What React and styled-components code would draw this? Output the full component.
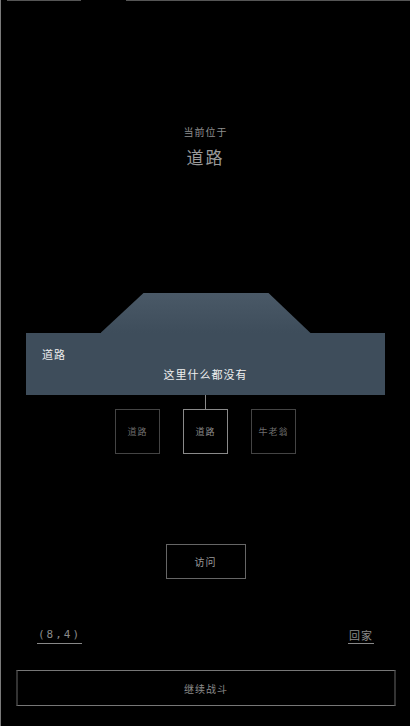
import React from "react";
import styled, { createGlobalStyle } from "styled-components";

const Global = createGlobalStyle`
  html, body { margin: 0; padding: 0; background: #000; }
  body { font-family: "Noto Sans CJK SC", "Noto Sans", sans-serif; }
  #root { width: 410px; height: 726px; }
`;

const Frame = styled.div`
  position: relative;
  width: 410px;
  height: 726px;
  box-sizing: border-box;
  border-left: 1px solid #7a7a7a;
  background: #000;
  display: flex;
  flex-direction: column;
  overflow: hidden;
`;

const TopEdge = styled.div`
  display: flex;
  height: 1px;
  gap: 45px;
  padding-left: 6px;
`;

const EdgeSeg = styled.div`
  height: 1px;
  background: #555;
  width: ${(p) => (p.$w ? `${p.$w}px` : "auto")};
  flex: ${(p) => (p.$w ? "none" : "1")};
`;

const Header = styled.div`
  margin-top: 122px;
  display: flex;
  flex-direction: column;
  align-items: center;
  color: #8e8e8e;
`;

const SubTitle = styled.div`
  font-size: 10px;
  line-height: 18px;
  letter-spacing: 1px;
`;

const Title = styled.div`
  margin-top: 4px;
  font-size: 17px;
  line-height: 24px;
  letter-spacing: 2px;
  color: #9a9a9a;
`;

const MapArea = styled.div`
  margin-top: 124px;
  display: flex;
  flex-direction: column;
  align-items: center;
`;

const Roof = styled.div`
  width: 210px;
  height: 40px;
  background: linear-gradient(#4a5967, #3e4d5b);
  clip-path: polygon(43px 0, 168px 0, 210px 40px, 0 40px);
`;

const Tile = styled.div`
  align-self: stretch;
  margin: 0 25px;
  height: 62px;
  background: #3e4d5b;
  box-sizing: border-box;
  padding: 12px 16px 0;
  color: #f0f0f0;
  font-size: 11px;
  display: flex;
  flex-direction: column;
`;

const TileName = styled.div`
  line-height: 18px;
  letter-spacing: 1px;
`;

const TileDesc = styled.div`
  text-align: center;
  line-height: 18px;
  margin-top: 2px;
  letter-spacing: 1px;
`;

const Connector = styled.div`
  width: 1px;
  height: 14px;
  background: #8a8a8a;
`;

const Choices = styled.div`
  display: flex;
  gap: 23px;
`;

const Choice = styled.div`
  width: 45px;
  height: 45px;
  box-sizing: border-box;
  border: 1px solid ${(p) => (p.$active ? "#8a8a8a" : "#444")};
  display: flex;
  align-items: center;
  justify-content: center;
  color: ${(p) => (p.$active ? "#8a8a8a" : "#6e6e6e")};
  font-size: 9px;
  letter-spacing: 1px;
`;

const VisitButton = styled.div`
  margin: 90px auto 0;
  width: 80px;
  height: 35px;
  box-sizing: border-box;
  border: 1px solid #666;
  display: flex;
  align-items: center;
  justify-content: center;
  color: #9a9a9a;
  font-size: 10px;
  letter-spacing: 1px;
`;

const InfoRow = styled.div`
  margin-top: 48px;
  display: flex;
  justify-content: space-between;
  padding: 0 36px 0 36px;
`;

const LinkText = styled.span`
  color: #8a8a8a;
  font-size: ${(p) => p.$size || 11}px;
  font-family: ${(p) => (p.$mono ? '"DejaVu Sans Mono", monospace' : '"Noto Sans CJK SC", sans-serif')};
  letter-spacing: ${(p) => p.$ls || 1}px;
  line-height: 16px;
  border-bottom: 1px solid #888;
  padding: 0 1px;
`;

const BattleButton = styled.div`
  margin: 26px 14px 0 15px;
  height: 36px;
  box-sizing: border-box;
  border-top: 1px solid #777;
  border-bottom: 1px solid #777;
  border-left: 2px solid #333;
  border-right: 2px solid #333;
  display: flex;
  align-items: center;
  justify-content: center;
  color: #8a8a8a;
  font-size: 10px;
  letter-spacing: 1px;
`;

export default function App() {
  return (
    <>
      <Global />
      <Frame>
        <TopEdge>
          <EdgeSeg $w={74} />
          <EdgeSeg />
        </TopEdge>
        <Header>
          <SubTitle>当前位于</SubTitle>
          <Title>道路</Title>
        </Header>
        <MapArea>
          <Roof />
          <Tile>
            <TileName>道路</TileName>
            <TileDesc>这里什么都没有</TileDesc>
          </Tile>
          <Connector />
          <Choices>
            <Choice>道路</Choice>
            <Choice $active>道路</Choice>
            <Choice>牛老翁</Choice>
          </Choices>
        </MapArea>
        <VisitButton>访问</VisitButton>
        <InfoRow>
          <LinkText $mono $size={11} $ls={2}>(8,4)</LinkText>
          <LinkText>回家</LinkText>
        </InfoRow>
        <BattleButton>继续战斗</BattleButton>
      </Frame>
    </>
  );
}
